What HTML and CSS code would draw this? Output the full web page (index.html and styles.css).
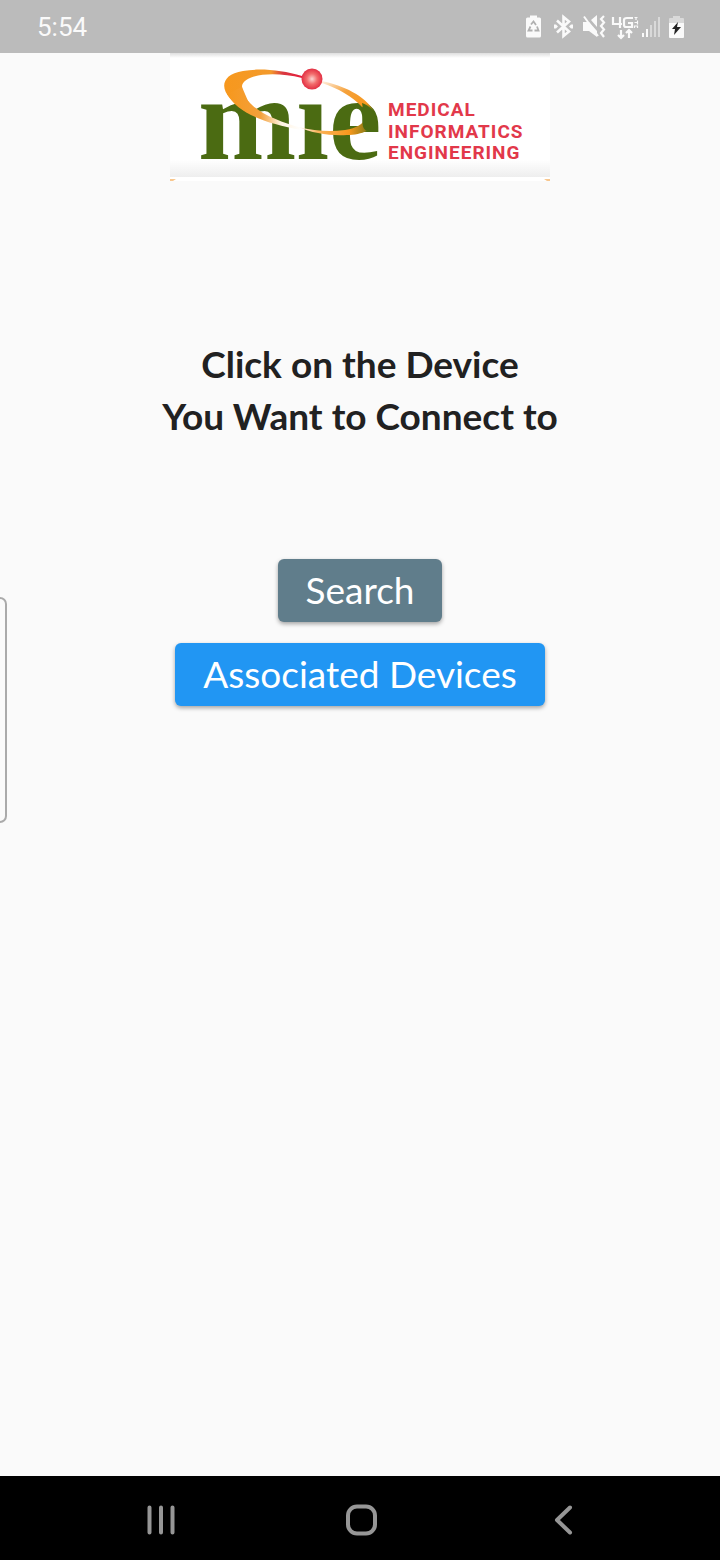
FILE: index.html
```html
<!DOCTYPE html>
<html lang="en">
<head>
<meta charset="utf-8">
<meta name="viewport" content="width=device-width, initial-scale=1">
<title>Connect a Device</title>
<link rel="stylesheet" href="styles.css">
</head>
<body>
<header class="status">
  <time class="clock">5:54</time>
  <svg class="status-icons" viewBox="0 0 160 33" width="160" height="33" aria-hidden="true">
    <path fill="#fafafa" d="M3.500 7.500h2.500v-2h7v2h2.500q1.500 0 1.500 1.500v17q0 1.500-1.500 1.500h-12q-1.500 0-1.500-1.500v-17q0-1.500 1.500-1.500z"/>
    <path fill="none" stroke="#b0b0b0" stroke-width="1.800" d="M7 14.500l2.500-3 2.500 3.500M13 16.500l1.500 4h-4M8.500 20.500h-4l2-4"/>
    <g fill="none" stroke="#fafafa" stroke-width="2.600">
      <path d="M33 10.500l12 11-5.500 4.500v-19l5.500 4.500-12 11"/>
    </g>
    <path fill="#fafafa" d="M30 14.500h2l2 2-2 2h-2zM49 14.500h-2l-2 2 2 2h2z"/>
    <path fill="#fafafa" d="M59 12h6l8 9v6l-8-6h-6zM67 10l6-5v12z"/>
    <path stroke="#fafafa" stroke-width="2" d="M60 6.500l14 19.500"/>
    <path fill="none" stroke="#fafafa" stroke-width="2.200" d="M80 6l-3 3 3 3.500-3 3.500 3 3.500-3 3.500 3 4"/>
    <g fill="none" stroke="#fafafa" stroke-width="2.200">
      <path d="M89 7v7h9M96 7v11M109 8h-6q-3 0-3 2v5q0 2 2 2h6v-4h-4"/>
      <path d="M97 20v8m-3-3l3 3 3-3M105 28v-8m-3 3l3-3 3 3"/>
      <path stroke-width="1.200" d="M110.500 7.500h3M112 7v3M110.500 12.500h3m0-2v4M110.500 18v-2h3v2"/>
    </g>
    <path fill="#fafafa" d="M118 23h2v4h-2zM122 19h2v8h-2z"/>
    <path fill="#d9d9d9" d="M126 15h2v12h-2zM130 11h2v16h-2zM134 7h2v20h-2z"/>
    <path fill="#d9d9d9" d="M145 9q0-1 1-1h3v-2h7v2h3q1 0 1 1v5h-15z"/>
    <path fill="#fafafa" d="M145 13h15v14q0 1-1 1h-13q-1 0-1-1z"/>
    <path fill="#222" d="M154 12l-6 7h3l-1 6 7-8h-4z"/>
  </svg>
</header>
<main class="screen">
  <svg class="logo" viewBox="0 0 380 128" role="img" aria-label="MIE Medical Informatics Engineering">
    <defs>
      <linearGradient id="panel" x2="0" y2="1">
        <stop offset="0" stop-color="#dedede"/><stop offset=".04" stop-color="#fff"/>
        <stop offset=".86" stop-color="#fff"/><stop offset="1" stop-color="#eee"/>
      </linearGradient>
      <linearGradient id="arc">
        <stop offset="0" stop-color="#f7981d"/><stop offset=".6" stop-color="#f39a2b"/>
        <stop offset=".75" stop-color="#d93a40"/><stop offset="1" stop-color="#e51c3c"/>
      </linearGradient>
      <linearGradient id="sweep">
        <stop offset="0" stop-color="#f7981d"/><stop offset=".45" stop-color="#f3a03c"/>
        <stop offset=".72" stop-color="#fff3e0"/><stop offset="1" stop-color="#fff"/>
      </linearGradient>
      <linearGradient id="base">
        <stop offset="0" stop-color="#fff"/><stop offset=".25" stop-color="#fbb35a"/>
        <stop offset=".65" stop-color="#f7981d"/><stop offset="1" stop-color="#4b6b12"/>
      </linearGradient>
      <linearGradient id="rise" x2="1" y2="1">
        <stop offset="0" stop-color="#fff0e2"/><stop offset=".4" stop-color="#f5a13a"/>
        <stop offset=".8" stop-color="#f7981d"/><stop offset="1" stop-color="#4b6b12"/>
      </linearGradient>
      <radialGradient id="ball">
        <stop offset="0" stop-color="#fbd5d2"/><stop offset=".5" stop-color="#f26b6b"/><stop offset="1" stop-color="#e22f43"/>
      </radialGradient>
    </defs>
    <rect width="380" height="124" fill="url(#panel)"/>
    <path fill="#fff" d="M0 124h380v4h-380z"/>
    <path fill="#f8c78e" d="M0 126h6l-3 2h-3zM380 126h-6l3 2h3z"/>
    <text class="logo-mark" x="28" y="106">mıe</text>
    <path fill="url(#arc)" d="M132 23C112 17 89 15 73 18C52 21 50 35 60 45C65 51 71 56 78 60L91 60C79 51 72 42 72 33C74 21 104 18 132 25z"/>
    <path fill="url(#sweep)" d="M57 41C67 59 92 70 132 77L132 75C109 69 88 60 78 48L72 34z"/>
    <path fill="url(#base)" d="M128 74C145 78 160 79 175 77C187 75 192 71 196 66L207 67C205 76 192 82 177 82C160 83 142 80 128 74z"/>
    <path fill="url(#rise)" d="M152 28C174 33 194 42 204 58L192 54C182 43 169 36 152 30z"/>
    <path fill="#4b6b12" d="M192 50C199 52 206 59 207 67C206 72 202 76 197 78C189 74 195 65 192 50z"/>
    <circle cx="142" cy="26" r="10.500" fill="url(#ball)"/>
    <g class="logo-name">
      <text x="218" y="63">MEDICAL</text>
      <text x="218" y="85">INFORMATICS</text>
      <text x="218" y="106">ENGINEERING</text>
    </g>
  </svg>
  <h1 class="title">Click on the Device<br>You Want to Connect to</h1>
  <div class="actions">
    <button class="button button-search" type="button">Search</button>
    <button class="button button-devices" type="button">Associated Devices</button>
  </div>
  <div class="edge-handle"></div>
</main>
<nav class="navbar" aria-label="System">
  <button class="nav-button" type="button" aria-label="Recent apps">
    <svg width="40" height="40" viewBox="0 0 40 40"><path d="M9.500 7.500v25M21 7.500v25M32.500 7.500v25"/></svg>
  </button>
  <button class="nav-button" type="button" aria-label="Home">
    <svg width="40" height="40" viewBox="0 0 40 40"><rect x="7" y="6.500" width="27" height="27" rx="9"/></svg>
  </button>
  <button class="nav-button" type="button" aria-label="Back">
    <svg width="40" height="40" viewBox="0 0 40 40"><path d="M28 7.500l-13 12.500 13 12.500"/></svg>
  </button>
</nav>
</body>
</html>
```
FILE: styles.css
```css
* { box-sizing: border-box; }

body {
  margin: 0;
  min-height: 100vh;
  display: flex;
  flex-direction: column;
  background: #fafafa;
  color: #212121;
  font-family: Lato, "Open Sans", sans-serif;
}

.status {
  display: flex;
  align-items: center;
  justify-content: space-between;
  height: 53px;
  padding: 0 36px 0 37px;
  background: #bbb;
  color: #fafafa;
}

.clock {
  font: 26px/32px Roboto, sans-serif;
}

.screen {
  position: relative;
  flex: 1;
  display: flex;
  flex-direction: column;
  align-items: center;
}

.logo {
  width: 380px;
  max-width: 100%;
  overflow: visible;
}

.logo-mark {
  font: bold 118px "Liberation Serif", serif;
  fill: #4b6b12;
}

.logo-name {
  font: bold 19px Roboto, "Liberation Sans", sans-serif;
  letter-spacing: 1px;
  fill: #e2384a;
}

.title {
  margin: 157px 0 117px;
  font-size: 37px;
  font-weight: 700;
  line-height: 52px;
  text-align: center;
}

.actions {
  display: flex;
  flex-direction: column;
  align-items: center;
  gap: 21px;
}

.button {
  height: 63px;
  padding: 0 28px 2px;
  border: 0;
  border-radius: 6px;
  color: #fff;
  font: 37px/44px Lato, "Open Sans", sans-serif;
  box-shadow: 0 2px 4px rgba(0, 0, 0, 0.35);
}

.button-search { background: #607d8b; }

.button-devices { background: #2196f3; }

.edge-handle {
  position: absolute;
  left: 0;
  top: 544px;
  width: 7px;
  height: 226px;
  border: 2px solid #aaa;
  border-left: 0;
  border-radius: 0 7px 7px 0;
}

.navbar {
  display: flex;
  align-items: center;
  height: 84px;
  padding: 4px 58px 0 60px;
  background: #000;
}

.nav-button {
  flex: 1;
  display: flex;
  justify-content: center;
  padding: 0;
  border: 0;
  background: none;
}

.nav-button svg {
  fill: none;
  stroke: #969696;
  stroke-width: 4;
  stroke-linecap: round;
  stroke-linejoin: round;
}
```
